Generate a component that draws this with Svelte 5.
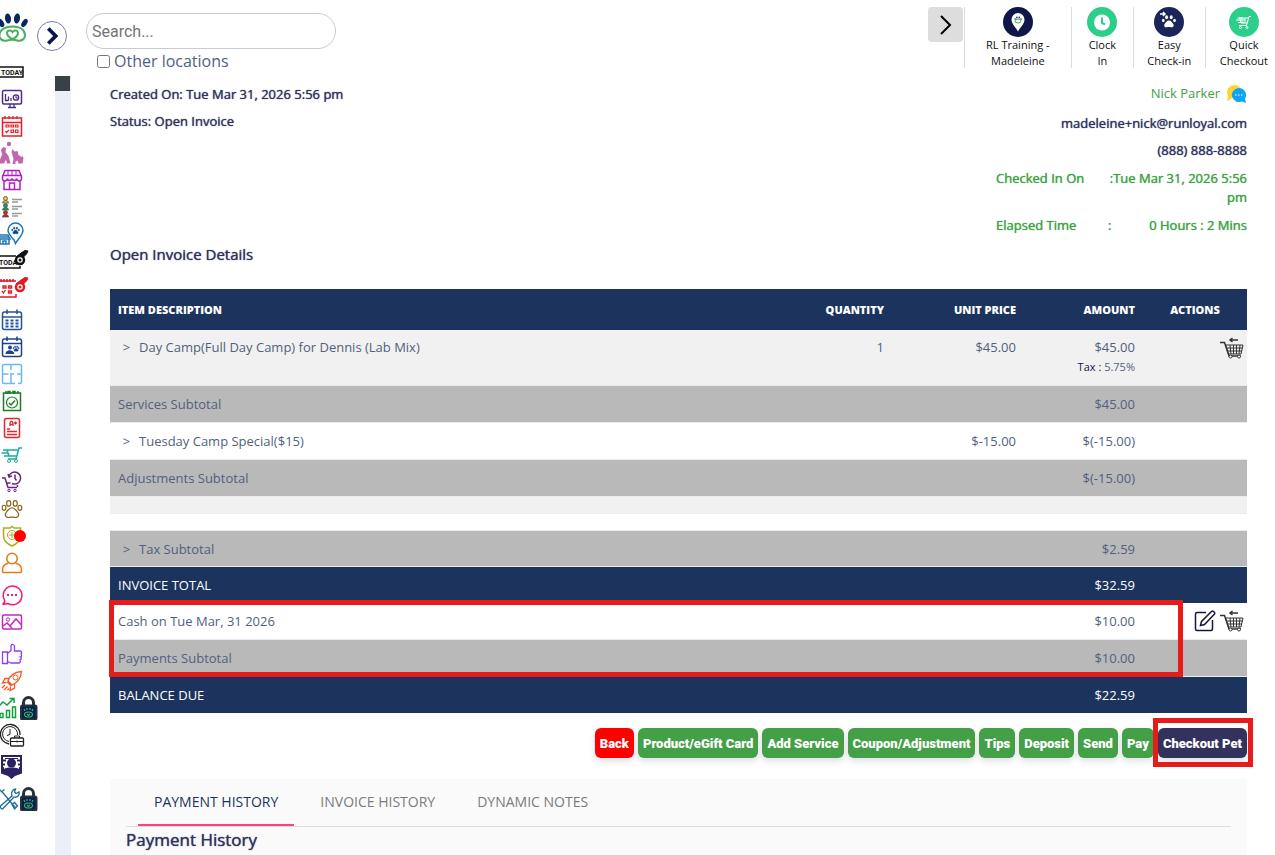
<script>
  const paw = `<ellipse cx="3.5" cy="10.5" rx="2" ry="2.7"/><ellipse cx="8.5" cy="5.8" rx="2.2" ry="3"/><ellipse cx="15.5" cy="5.8" rx="2.2" ry="3"/><ellipse cx="20.5" cy="10.5" rx="2" ry="2.7"/><path d="M12 10.5c-3.2 0-4.3 2.7-6 4.7-2.6 3-.6 6.300 2.500 5.700 2.300-.5 4.700-.5 7 0 3.100.6 5.100-2.700 2.500-5.700-1.700-2-2.800-4.700-6-4.700z"/>`;

  const key = `<path d="M16 8l5-4 4-2.500 3 .5-1.500 3-5 5z" fill="currentColor"/><circle cx="20" cy="11" r="4" fill="#fff" stroke-width="2.500"/><circle cx="20" cy="11" r="1.500" fill="currentColor" stroke="none"/>`;

  const lock = `<path d="M23.500 10V6.500a5 5 0 0 1 10 0V10" stroke="#263238" stroke-width="3"/><rect x="21" y="9.500" width="15.500" height="14" rx="1.500" fill="#06234f" stroke="#263238" stroke-width="2"/><g stroke="#3fae6a" stroke-width="1.200"><path d="M24 13l1 2M27 12v2M30 12v2M33 13l-1 2"/><ellipse cx="28.500" cy="18.500" rx="4" ry="2.500"/><path d="M27 18l1.500 1.500L30 18"/></g>`;

  const nav = [
    { label: 'Today', color: '#111', art: `<rect x="-1" y="7" width="24" height="10" stroke-width="1.500"/><text x="1" y="14.500" font-family="Roboto, sans-serif" font-size="7" font-weight="700" fill="#111" stroke="none">TODAY</text>` },
    { label: 'Dashboard', color: '#4b2e83', art: `<rect x="2.500" y="3.500" width="19" height="13.500" rx="1.500" stroke-width="1.500"/><path stroke-width="1.300" d="M10 17v3.500M14 17v3.500M8 20.500h8M5.500 7v6.500h3M8.500 9.500v4M11 11v3"/><circle cx="16" cy="10.500" r="2.700" stroke-width="1.300"/><path d="M16 8v3h3"/>` },
    { label: 'Calendar', color: '#ed1c24', art: `<rect x="2.500" y="4" width="19" height="18" stroke-width="1.500"/><path stroke-width="1.300" d="M3 8.500h18M5 2v3M9 2v3M13 2v3M17 2v3"/><path stroke-width="1.200" d="M6 11h3v2H6zM11 11h2.500v2H11zM15.500 11h2.500v2h-2.500zM11 16h2.500v2.500H11zM15.500 16h2.500v2.500h-2.500zM5.500 17l1 1.500 2.500-2.500"/>` },
    { label: 'Play groups', color: '#c266ad', art: `<circle cx="9" cy="3" r="2.200" fill="currentColor" stroke="none"/><path fill="currentColor" stroke="none" d="M1 9l2-3 3 1-.5 4 3 4 2 7.500H7l-1-4-2 4H0v-4l2-5zM11.500 11l1-3 2 2.500 3-.5 1 4 3 2 1-1 1 2-1 5.500h-4l-1-3-2 1v2.500h-3l1-5-1-4z"/>` },
    { label: 'Store', color: '#b01ec0', art: `<path stroke-width="1.500" d="M5 2.500h14l2.500 6v2a2.400 2.400 0 0 1-4.800 0 2.400 2.400 0 0 1-4.700 0 2.400 2.400 0 0 1-4.700 0 2.400 2.400 0 0 1-4.800 0v-2zM2.500 7.500h19M4 13v8.500h16V13M9.500 21v-6h5v6"/><path d="M8 2.500v5M12 2.500v5M16 2.500v5"/>` },
    { label: 'Client list', color: '#444', art: `<g stroke-width=".7"><g fill="#f1c232"><circle cx="5.500" cy="3.500" r="2"/><path d="M2.500 8a3 2.500 0 0 1 6 0z"/></g><g fill="#1aa260"><circle cx="5.500" cy="10.500" r="2"/><path d="M2.500 15a3 2.500 0 0 1 6 0z"/></g><g fill="#ed1c24"><circle cx="5.500" cy="17.500" r="2"/><path d="M2.500 22a3 2.500 0 0 1 6 0z"/></g></g><path stroke="#999" stroke-width="1.500" d="M12 4.500h10M12 7h6M12 11.500h10M12 14h6M12 18.500h10M12 21h6"/>` },
    { label: 'Locations', color: '#1f78b4', art: `<path stroke-width="1.500" d="M14 18c-3-3.500-6-6.500-6-9.500a7.500 7.500 0 0 1 15 0c0 4-5 8.500-7.500 13z"/><g transform="translate(11 4) scale(.38)" fill="#12427a">${paw}</g><path stroke-width="1.500" d="M-1 13h9l2 4H-1M0 17v5h9v-5M3 22v-3h3v3M0 15h9"/>` },
    { label: 'Today lockup', color: '#111', art: `<path d="M16 7H-1v12h21v-2" stroke-width="1.500"/><text x="-1" y="16" font-family="Roboto, sans-serif" font-size="7" font-weight="700" fill="#111" stroke="none">TODA</text>${key}` },
    { label: 'Calendar lockup', color: '#e01b22', art: `<path d="M-1 5h17M16 18v3H-1M1 3v3M4 3v3M7 3v3M10 3v3M13 3v3" stroke-width="1.500"/><path stroke-width="1.300" d="M3 10h3v2H3zM8.500 10h3v2h-3zM2 15l1.500 2 2-3M8.500 15h3v2h-3z"/>${key}` },
    { label: 'Month view', color: '#24509a', gap: true, art: `<rect x="2.500" y="4" width="19" height="17.500" rx="2" stroke-width="1.500"/><path stroke-width="1.500" d="M3 9h18M7 1.500V6M17 1.500V6"/><path stroke-width="2" stroke-dasharray="3 2" d="M5.500 12.500h14M5.500 15.500h14M5.500 18.500h14"/>` },
    { label: 'Pet schedule', color: '#1d4289', art: `<rect x="2.500" y="4" width="19" height="17.500" rx="2" stroke-width="1.500"/><path stroke-width="1.500" d="M3 8.500h18M7 1.500V6M17 1.500V6"/><g fill="currentColor" stroke="none"><circle cx="10" cy="12.500" r="2"/><path d="M5.500 19c0-5 8-5 9 0z"/></g><g transform="translate(12.500 10) scale(.3)" fill="currentColor">${paw}</g>` },
    { label: 'Layout', color: '#6cb8f4', art: `<path stroke-width="1.500" d="M15 21.500H4a1.500 1.500 0 0 1-1.500-1.500V4A1.500 1.500 0 0 1 4 2.500h16A1.500 1.500 0 0 1 21.500 4v16a1.500 1.500 0 0 1-1.500 1.500h-2M2.500 12h6M11 2.500V8M11 11v10M11 12h3M17 12h4.500"/>` },
    { label: 'Tasks', color: '#16801f', art: `<rect x="3.500" y="4" width="17" height="17.500" stroke-width="1.500"/><path stroke-width="1.500" d="M6 2v3M8 5V2.500h2V5M13 5V2.500h2V5M18 2v3M9 14l2 2 4-4.500"/><circle cx="12" cy="13.500" r="5.500" stroke-width="1.200"/>` },
    { label: 'Report cards', color: '#e3262e', art: `<rect x="4.500" y="2.500" width="15" height="19" rx="2" stroke-width="1.500"/><path stroke-width="1.300" d="M10 10V7l1-1.500h1L13 7v3M10 8.500h3M14 7h3M15.500 5.500v3"/><path stroke-width="1.500" d="M7 13h3M7 15.500h10M7 18.500h10"/>` },
    { label: 'Checkout', color: '#1aae9f', art: `<path stroke-width="1.500" d="M22 5h-3l-3 11H8M7 7h10.500M7 7l2 6h7.500M3 7h5M1.500 10H8M4 13h5"/><circle cx="9" cy="18" r="1.500"/><circle cx="16" cy="18" r="1.500"/>` },
    { label: 'Order history', color: '#6b2481', art: `<path stroke-width="1.500" d="M9 6a6 6 0 1 1 3 7.500M15 4.500v4l1.500 2M8 4l1 3 3-1M2 8h3l3 9.500h9M6.500 13h4M17.500 17v-2"/><circle cx="9" cy="20.500" r="1.200"/><circle cx="15" cy="20.500" r="1.200"/>` },
    { label: 'Pets', color: '#8a6518', art: `<g stroke-width="1.300" transform="translate(.8 1) scale(.93)">${paw}</g>` },
    { label: 'Protection', color: '#b3ab1d', art: `<path stroke-width="1.500" d="M12 2.500l2 1.500h6.500v8c0 5-4 8-8.500 10-4.500-2-8.500-5-8.500-10V4H10z"/><circle cx="12" cy="11" r="4.500"/><path d="M12 8v6M9 11h6"/><circle cx="20" cy="12" r="6" fill="#f00" stroke="none"/>` },
    { label: 'Users', color: '#e87817', art: `<circle cx="12" cy="7.500" r="5.200" stroke-width="1.500"/><path stroke-width="1.500" d="M8.500 12C5 13 2.500 15.500 2.500 19v1.500a1 1 0 0 0 1 1h17a1 1 0 0 0 1-1V19c0-3.500-2.500-6-6-7"/>` },
    { label: 'Messages', color: '#ff1478', gap: true, art: `<path stroke-width="1.500" d="M4.500 17A9.300 9.300 0 1 1 8 20.500L2.500 21.500c2-1 2.500-2.500 2-4.500z"/><path stroke-width="2" d="M7 12h2M11 12h2M15 12h2"/>` },
    { label: 'Gallery', color: '#bd2bc0', art: `<rect x="2.500" y="5" width="19" height="14" rx="1.500" stroke-width="1.500"/><circle cx="8" cy="9.500" r="1.700"/><path stroke-width="1.500" d="M3 16l4-3 3 3 6-7 5.500 6M10 16l2 2"/>` },
    { label: 'Reviews', color: '#8c3df2', gap: true, art: `<path stroke-width="1.300" d="M2.500 10h5v11.500h-5zM7.500 11.500l3.500-3V3.500c1-2 3.500-1 3.500 1V9H20c2 0 2 3 .5 3 1.500.5 1.500 2.800 0 3 1 .5 1 2.800-.5 3 1 1.500 0 3-1.500 3H11l-3.500-1.500"/>` },
    { label: 'Marketing', color: '#f15a24', art: `<path stroke-width="1.300" d="M8 12C10 6 15 3 21.500 2.500 21 9 18 13.500 12 16zM9 9.500H5L2.500 14l4-.5M14.500 15v4L10 21.500l.5-4M7 13l4.500 4M5 16l-3 3M7.500 17.500L4 21M9 19.500L7.500 21"/><circle cx="15.500" cy="8.500" r="2.500"/>` },
    { label: 'Reports', color: '#13a03c', art: `<path stroke-width="1.500" d="M-1 10l4-4 4 3 6-6M9.500 2.500H14V7M0 21.500v-4h3v4zM6.500 21.500v-7h3v7zM12.500 21.500V11h3v10.500z"/>${lock}` },
    { label: 'Time clock', color: '#222', art: `<path stroke-width="1.300" d="M9 21A9.800 9.800 0 1 1 20 12"/><path d="M9 18.500A7.500 7.500 0 1 1 17.500 12M10 6v5.500l-3 1"/><rect x="10.500" y="15" width="13" height="8" rx="1" stroke-width="1.300"/><path d="M14.500 15v-2h5v2M10.500 18.500h13M17 17.500v2"/>` },
    { label: 'Staff', color: '#2a2263', gap: true, art: `<path stroke-width="2" d="M2 12V1h19v11M2 5.500h4M17 5.500h4M2 9.500h3M18 9.500h3"/><path d="M5 3.500h13"/><circle cx="11.500" cy="8" r="4.500" fill="currentColor" stroke="none"/><path fill="currentColor" stroke="none" d="M1 12h3v2c2-2 13-2 15 0v-2h3v6.500l-7 2.500-3.500 3L8 21l-7-2.500z"/>` },
    { label: 'Settings', color: '#1c6c9c', gap: true, art: `<path stroke-width="1.300" d="M0 3l4 4 9 11 3 3M1.500 5l3-2.500M12 17.500l2.500-2 3 3.500-3 3z"/><path stroke-width="1.300" d="M12 9c-1-3 0-6.500 3.500-7l-1 3 1.500 1.500L19 5c1 3-2 6-5 5L3 21.500c-1 1-3.500-1-2.500-2.500z"/>${lock}` }
  ];

  const shortcuts = [
    { name: 'location', top: 'RL Training -', bottom: 'Madeleine', icon: 'pin' },
    { name: 'clock', top: 'Clock', bottom: 'In', icon: 'clock' },
    { name: 'checkin', top: 'Easy', bottom: 'Check-in', icon: 'paw' },
    { name: 'quick', top: 'Quick', bottom: 'Checkout', icon: 'cart' }
  ];

  const rows = [
    { kind: 'item striped', desc: 'Day Camp(Full Day Camp) for Dennis (Lab Mix)', expand: true, qty: '1', price: '$45.00', amount: '$45.00', tax: '5.75%', remove: true },
    { kind: 'subtotal', desc: 'Services Subtotal', amount: '$45.00' },
    { kind: 'line', desc: 'Tuesday Camp Special($15)', expand: true, price: '$-15.00', amount: '$(-15.00)' },
    { kind: 'subtotal', desc: 'Adjustments Subtotal', amount: '$(-15.00)' },
    { kind: 'spacer striped' },
    { kind: 'spacer' },
    { kind: 'subtotal short', desc: 'Tax Subtotal', expand: true, amount: '$2.59' },
    { kind: 'total', desc: 'INVOICE TOTAL', amount: '$32.59' },
    { kind: 'line', desc: 'Cash on Tue Mar, 31 2026', amount: '$10.00', edit: true, remove: true },
    { kind: 'subtotal', desc: 'Payments Subtotal', amount: '$10.00' },
    { kind: 'total', desc: 'BALANCE DUE', amount: '$22.59' }
  ];

  const actions = ['Product/eGift Card', 'Add Service', 'Coupon/Adjustment', 'Tips', 'Deposit', 'Send', 'Pay'];
  const tabs = ['PAYMENT HISTORY', 'INVOICE HISTORY', 'DYNAMIC NOTES'];

  let search = $state('');
  let otherLocations = $state(false);
  let activeTab = $state('PAYMENT HISTORY');
</script>

<div class="page">
  <aside class="sidebar">
    <div class="brand">
      <svg class="logo" viewBox="0 0 28 32" aria-label="Home">
        <g fill="#06285f">
          <ellipse cx="1" cy="10" rx="2.600" ry="4.500" transform="rotate(-32 1 10)" />
          <ellipse cx="8" cy="5.500" rx="3" ry="5" transform="rotate(-8 8 5.500)" />
          <ellipse cx="17" cy="5.500" rx="3" ry="5" transform="rotate(8 17 5.500)" />
          <ellipse cx="24.500" cy="10" rx="2.500" ry="4.500" transform="rotate(32 24.500 10)" />
        </g>
        <g fill="none" stroke="#4caf5d" stroke-width="2">
          <path d="M7 27.500c-5 1-8-2-7.500-6 .5-5 6-8 13-8s12 3 12.500 8c.5 4-3 7-8 6" />
          <path d="M7 27.500c6-.5 11-4 11-7.500 0-3-4-3.500-5.500-1-1.500-2.500-5.500-2-5.500 1 0 3.500 5 7 10.500 7.500" />
        </g>
      </svg>
      <button class="expand" aria-label="Expand menu">
        <svg viewBox="0 0 30 30"><path d="M11 7l8 8-8 8" /></svg>
      </button>
    </div>
    <div class="rail">
      <nav>
        {#each nav as item (item.label)}
          <a href="#top" class:gap={item.gap} aria-label={item.label}>
            <svg viewBox="0 0 40 24" color={item.color} fill="none" stroke="currentColor">{@html item.art}</svg>
          </a>
        {/each}
      </nav>
      <div class="track"><div class="thumb"></div></div>
    </div>
  </aside>

  <main>
    <header>
      <div class="search">
        <input type="text" placeholder="Search..." aria-label="Search" bind:value={search} />
        <label><input type="checkbox" bind:checked={otherLocations} /> Other locations</label>
      </div>
      <button class="more" aria-label="More shortcuts">
        <svg viewBox="0 0 35 35"><path d="M13 9l9 9-9 9" /></svg>
      </button>
      {#each shortcuts as s (s.name)}
        <a href="#top" class="shortcut {s.name}">
          <svg viewBox="0 0 30 30">
            {#if s.icon === 'pin'}
              <circle cx="15" cy="15" r="15" fill="#0f1648" />
              <path d="M15 24.500c-2-4-6.500-7.500-6.500-12a6.500 6.500 0 0 1 13 0c0 4.500-4.500 8-6.500 12z" fill="#fff" />
              <g transform="translate(11 8.500) scale(.34)" fill="#14224f">{@html paw}</g>
              <ellipse cx="15" cy="14" rx="3" ry="2" fill="#fff" stroke="#4caf50" />
            {:else if s.icon === 'clock'}
              <circle cx="15" cy="15" r="15" fill="#2dce89" />
              <circle cx="15" cy="15.500" r="8" fill="#fff" />
              <path d="M15 10.500v5.500l3 1.500" fill="none" stroke="#2dce89" stroke-width="2" />
            {:else if s.icon === 'paw'}
              <circle cx="15" cy="15" r="15" fill="#1b2559" />
              <g transform="translate(7 6.500) scale(.66)" fill="#fff">{@html paw}</g>
              <path d="M6 7h5M9 5l2 2-2 2" fill="none" stroke="#fff" stroke-width="1.500" />
            {:else}
              <circle cx="15" cy="15" r="15" fill="#2dce89" />
              <g fill="none" stroke="#fff">
                <path d="M22 9.500h-2l-2.500 9h-7.500M10 11h9.500M10.500 11l1.500 5h6M7 13h9M8.500 11h5M9 15.500h6M13 11v5M16 11v5" />
                <circle cx="11.500" cy="20.500" r="1" />
                <circle cx="18" cy="20.500" r="1" />
              </g>
            {/if}
          </svg>
          <span>{s.top}<br />{s.bottom}</span>
        </a>
      {/each}
    </header>

    <div class="content">
      <section class="summary">
        <div class="dates strong">
          <div>Created On: Tue Mar 31, 2026 5:56 pm</div>
          <div>Status: Open Invoice</div>
        </div>
        <div class="client">
          <div class="name">
            <a href="#top">Nick Parker</a>
            <svg viewBox="0 0 21 18" aria-label="Chat">
              <path d="M8 0a8 7.500 0 0 1 7 4L5 14l-4 2 1-5A8 7.500 0 0 1 8 0z" fill="#fdd52f" />
              <path d="M12.500 3a7.500 7 0 0 1 6.500 10.500l1 4.500-4-1.500A7.500 7 0 1 1 12.500 3z" fill="#0aa5f5" />
              <path d="M9 10h1.500M12 10h1.500M15 10h1.500" stroke="#fff" />
            </svg>
          </div>
          <div class="strong">madeleine+nick@runloyal.com</div>
          <div class="strong">(888) 888-8888</div>
          <dl class="strong">
            <dt>Checked In On</dt>
            <dd>:Tue Mar 31, 2026 5:56 pm</dd>
            <dt>Elapsed Time</dt>
            <dd class="spread"><span>:</span><span>0 Hours : 2 Mins</span></dd>
          </dl>
        </div>
      </section>

      <h2 class="strong">Open Invoice Details</h2>

      <div class="invoice">
        <table>
          <thead>
            <tr>
              <th class="desc">ITEM DESCRIPTION</th>
              <th class="qty">QUANTITY</th>
              <th class="price">UNIT PRICE</th>
              <th class="amount">AMOUNT</th>
              <th class="act">ACTIONS</th>
            </tr>
          </thead>
          <tbody>
            {#each rows as row}
              <tr class={row.kind}>
                <td class="desc">
                  {#if row.expand}<button class="caret" aria-label="Expand {row.desc}">&gt;</button>{/if}{row.desc ?? ''}
                </td>
                <td>{row.qty ?? ''}</td>
                <td>{row.price ?? ''}</td>
                <td>
                  {row.amount ?? ''}
                  {#if row.tax}<div class="tax"><b>Tax :</b> {row.tax}</div>{/if}
                </td>
                <td class="tools">
                  <div>
                    {#if row.edit}
                      <button aria-label="Edit">
                        <svg viewBox="0 0 22 22" width="22" height="22" fill="none" stroke="#15154b" stroke-width="1.500">
                          <path d="M12 2.500H3A1.500 1.500 0 0 0 1.500 4v15A1.500 1.500 0 0 0 3 20.500h14a1.500 1.500 0 0 0 1.500-1.500v-9" />
                          <path d="M6.500 15.500l1-4L17.500 1.500a1.500 1.500 0 0 1 2 0l.8.8a1.500 1.500 0 0 1 0 2L10.500 14.500z" />
                        </svg>
                      </button>
                    {/if}
                    {#if row.remove}
                      <button aria-label="Remove">
                        <svg viewBox="0 0 24 22" width="24" height="22" fill="none" stroke="#333">
                          <path d="M0 5.500h4.500L9 19h12" stroke-width="1.500" />
                          <path d="M5.500 8h17.500l-2 9H8.500zM6.500 11h16M7.500 14h14.500M10 8l1 9M13.500 8v9M16.500 8v9M20 8l-1 9" />
                          <path d="M18 3H10M12.500 1L10 3l2.500 2" stroke-width="1.500" />
                          <circle cx="10.500" cy="19.500" r="1.500" fill="#fff" />
                          <circle cx="19" cy="19.500" r="1.500" fill="#fff" />
                        </svg>
                      </button>
                    {/if}
                  </div>
                </td>
              </tr>
            {/each}
          </tbody>
        </table>
        <div class="marker payments"></div>
      </div>

      <div class="actions">
        <button class="back">Back</button>
        {#each actions as action}
          <button>{action}</button>
        {/each}
        <div class="final">
          <button class="checkout">Checkout Pet</button>
          <div class="marker"></div>
        </div>
      </div>

      <section class="history">
        <div class="tabs" role="tablist">
          {#each tabs as tab}
            <button role="tab" class:active={activeTab === tab} aria-selected={activeTab === tab} onclick={() => (activeTab = tab)}>{tab}</button>
          {/each}
        </div>
        <h3 class="strong">Payment History</h3>
      </section>
    </div>
  </main>
</div>

<style>
  :global(body) { background: #fff; }
  * { box-sizing: border-box; }
  button { font: inherit; border: 0; padding: 0; background: none; cursor: pointer; }
  a { text-decoration: none; }
  svg { display: block; }

  .page { display: flex; min-height: 100vh; font-family: "Open Sans", sans-serif; font-size: 13px; color: #525f7f; }
  .strong { font-weight: 400; color: #32325d; text-shadow: 0 0 1px currentColor; }

  .sidebar { width: 71px; flex: none; display: flex; flex-direction: column; }
  .brand { display: flex; justify-content: space-between; height: 58px; padding: 13px 4px 0 0; }
  .logo { width: 28px; height: 32px; }
  .expand { width: 30px; height: 30px; margin-top: 8px; border: 1px solid #7d7da6; border-radius: 50%; }
  .expand svg { width: 28px; height: 28px; fill: none; stroke: #0f1648; stroke-width: 4; }
  .rail { flex: 1; display: flex; }
  nav { width: 55px; }
  nav a { display: flex; align-items: center; height: 27px; }
  nav a.gap { margin-top: 5px; }
  nav svg { width: 40px; height: 24px; }
  .track { width: 16px; margin-top: 18px; background: #eceff5; }
  .thumb { width: 15px; height: 15px; background: #384145; }

  main { flex: 1; min-width: 0; }
  header { display: flex; height: 80px; padding-top: 7px; }
  .search { flex: 1; padding: 6px 0 0 15px; }
  .search input[type='text'] { display: block; width: 250px; height: 36px; padding: 0 5px; border: 1px solid #c5ccd6; border-radius: 18px; font: 16px Roboto, sans-serif; color: #444; }
  .search label { display: flex; align-items: center; gap: 4px; margin-left: 11px; height: 24px; font-size: 16px; }
  .search input[type='checkbox'] { width: 13px; height: 13px; margin: 0; }
  .more { width: 35px; height: 35px; margin-right: 1px; border-radius: 4px; background: #ddd; }
  .more svg { width: 35px; height: 35px; fill: none; stroke: #000; stroke-width: 2; }
  .shortcut { display: flex; flex-direction: column; align-items: center; height: 61px; border-left: 1px solid #ddd; color: #111; font-size: 11px; line-height: 16px; text-align: center; }
  .shortcut svg { width: 30px; height: 30px; flex: none; }
  .location { width: 107px; }
  .clock { width: 62px; }
  .checkin { width: 72px; }
  .quick { padding: 0 7px 0 14px; }

  .content { padding: 0 28px 0 39px; }
  .summary { display: flex; justify-content: space-between; line-height: 27px; }
  .dates { padding-top: 1px; }
  .client { width: 251px; text-align: right; }
  .name { display: flex; justify-content: flex-end; align-items: center; gap: 6px; margin-bottom: 3px; }
  .name a { color: #43a047; }
  .name svg { width: 21px; height: 18px; }
  dl { display: grid; grid-template-columns: 112px 139px; row-gap: 9px; margin: 5px 0 0; line-height: 19px; }
  dl.strong { color: #43a047; }
  dt { text-align: left; }
  dd { margin: 0; }
  .spread { display: flex; justify-content: space-between; }
  h2 { margin: 9px 0 25px; font-size: 15px; line-height: 20px; }

  .invoice { position: relative; }
  table { width: 100%; border-spacing: 0; table-layout: fixed; }
  th { height: 41px; padding: 0 8px; background: #1c345d; color: #fff; font-size: 11px; font-weight: 800; text-align: right; }
  .desc { text-align: left; }
  th.qty { width: 100px; }
  th.price { width: 132px; }
  th.amount { width: 119px; }
  th.act { width: 104px; text-align: center; }
  td { height: 37px; padding: 0 8px; border-bottom: 1px solid #e9ecef; line-height: 20px; text-align: right; }
  .item td { height: 56px; padding-top: 7px; vertical-align: top; }
  .striped td { background: #f1f1f1; }
  .subtotal td { background: #b9b9b9; }
  .spacer td { height: 17px; line-height: 0; }
  .short td { height: 36px; }
  .total td { height: 36px; border: 0; background: #1c345d; color: #fff; }
  .caret { width: 21px; padding-right: 4px; color: inherit; }
  .tax { font-size: 11px; }
  .tax b { font-weight: 400; color: #15154b; }
  td.tools { padding-right: 3px; }
  .tools div { display: flex; justify-content: flex-end; gap: 4px; }

  .marker { position: absolute; border: 5px solid #e81b1b; pointer-events: none; }
  .payments { left: -1px; right: 64px; bottom: 36px; height: 77px; }

  .actions { display: flex; justify-content: flex-end; gap: 4px; margin: 15px 0 21px; }
  .actions button { height: 30px; padding: 0 5px; border-radius: 6px; background: #43a047; color: #fff; font: 900 13px Roboto, sans-serif; box-shadow: 0 3px 6px rgba(50, 50, 93, 0.16); }
  .actions .back { background: #f00; }
  .actions .checkout { background: #32325d; }
  .final { position: relative; }
  .final .marker { inset: -10px -6px -9px -5px; }

  .history { padding: 0 16px; background: #fafafa; }
  .tabs { display: flex; gap: 10px; height: 48px; padding-left: 12px; border-bottom: 1px solid #ddd; }
  .tabs button { padding: 0 16px; border-bottom: 2px solid transparent; font-size: 14px; color: #7b7b7b; }
  .tabs .active { border-color: #ff4081; color: #1c345d; }
  h3 { margin: 0; padding-bottom: 3px; font-size: 17px; line-height: 25px; }
</style>
